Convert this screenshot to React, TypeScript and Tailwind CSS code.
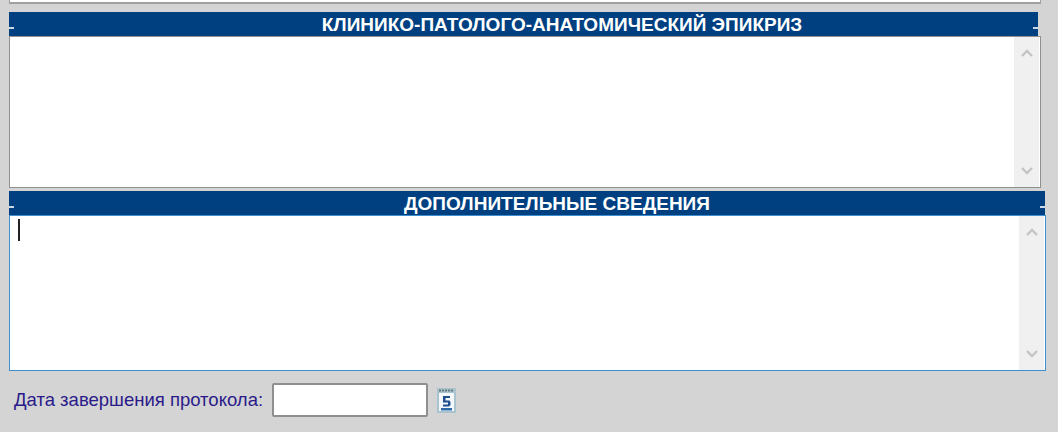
const Chevron = ({ up }: { up?: boolean }) => (
  <svg width="14" height="10" viewBox="0 0 14 10" fill="none" stroke="#c4c4c4" strokeWidth="2.4">
    <path d={up ? "M2 8 L7 3 L12 8" : "M2 2 L7 7 L12 2"} />
  </svg>
);

function Scrollbar() {
  return (
    <div className="flex w-[25px] flex-col items-center justify-between bg-[#f0f0f0] py-[11px]">
      <Chevron up />
      <Chevron />
    </div>
  );
}

function Bar({ title, width, pad }: { title: string; width: string; pad: string }) {
  return (
    <div className={`relative flex h-[24px] items-center justify-center bg-[#004080] text-[19px] font-bold leading-none text-white ${width} ${pad}`}>
      <span className="absolute left-0 top-[15px] h-[1.5px] w-[5px] bg-[#c9d6e6]" />
      <span className="absolute right-0 top-[15px] h-[1.5px] w-[5px] bg-[#c9d6e6]" />
      {title}
    </div>
  );
}

export default function App() {
  return (
    <div className="h-[432px] w-[1058px] overflow-hidden bg-[#d4d4d4] pl-[9px] font-['Liberation_Sans',Arial,sans-serif]">
      <div className="h-[4px] w-[1032px] border-x border-b-2 border-[#a0a0a0] bg-white" />
      <div className="mt-[8px]">
        <Bar title="КЛИНИКО-ПАТОЛОГО-АНАТОМИЧЕСКИЙ ЭПИКРИЗ" width="w-[1029px]" pad="pl-[77px]" />
        <div className="flex h-[152px] w-[1032px] justify-end border border-[#909090] bg-white pr-[1px]">
          <Scrollbar />
        </div>
      </div>
      <div className="mt-[3px]">
        <Bar title="ДОПОЛНИТЕЛЬНЫЕ СВЕДЕНИЯ" width="w-[1036px]" pad="pl-[60px]" />
        <div className="relative flex h-[156px] w-[1037px] justify-end border border-[#3d8fd0] bg-white pr-[1px]">
          <span className="absolute left-[8px] top-[3px] h-[22px] w-[1.5px] bg-[#222]" />
          <Scrollbar />
        </div>
      </div>
      <div className="mt-[12px] flex items-center">
        <label className="ml-[5px] w-[258px] text-[18.5px] leading-none text-[#2a1a8a]">Дата завершения протокола:</label>
        <div className="h-[34px] w-[156px] rounded-[2px] border-2 border-[#8f8f8f] bg-white" />
        <svg className="ml-[9px]" width="19" height="25" viewBox="0 0 19 25">
          <rect x="0" y="0" width="19" height="25" fill="#a9c4cc" />
          <path d="M2 2.5 H17" stroke="#687a80" strokeWidth="2" strokeDasharray="2 1" />
          <rect x="2" y="5" width="15" height="18" fill="#f4f8fb" />
          <path d="M6 8 H13 V10 H8.5 V12.5 H12.5 L13.5 14 V17 L12 18.5 H6 V16.5 H11 V14.5 H6 Z" fill="#1f4f8f" />
          <rect x="4" y="20" width="11" height="2.5" fill="#2f6aa8" />
        </svg>
      </div>
    </div>
  );
}
